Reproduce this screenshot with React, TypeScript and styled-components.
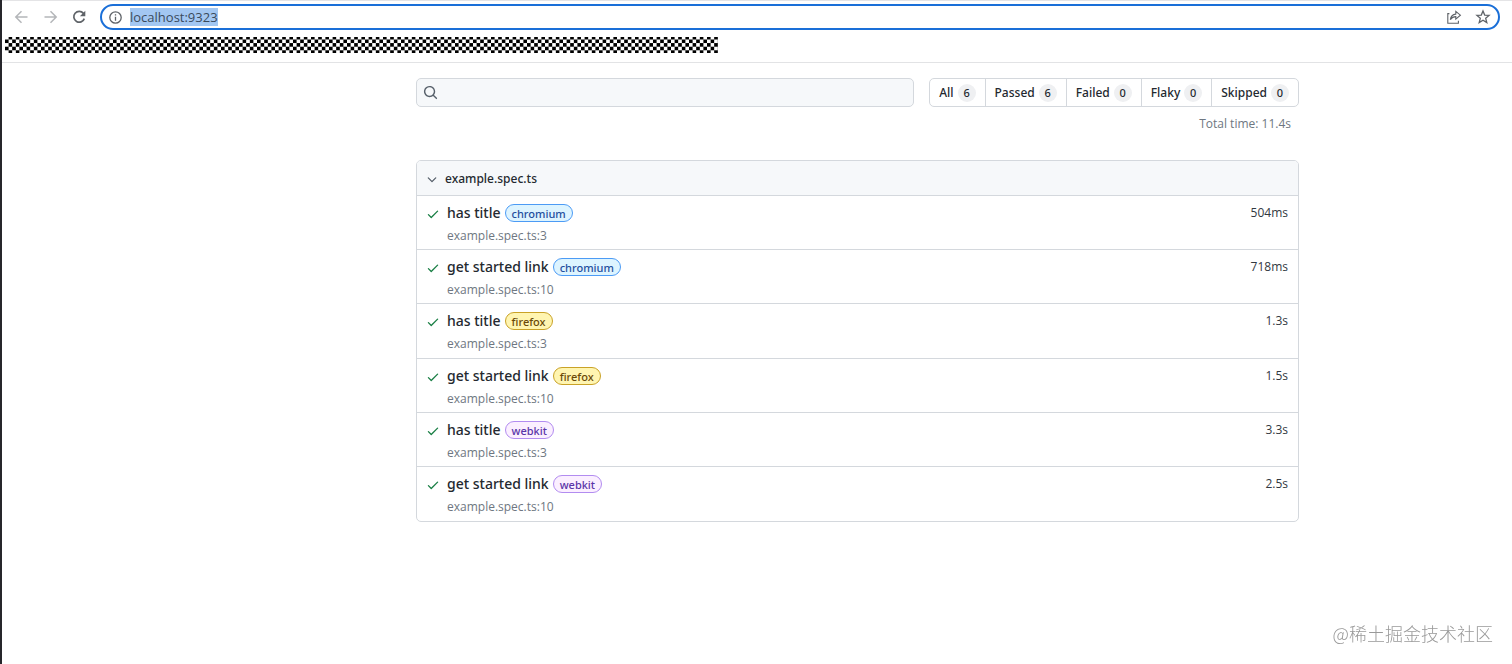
import React from "react";
import styled, { createGlobalStyle } from "styled-components";

const GlobalStyle = createGlobalStyle`
  *, *::before, *::after { box-sizing: border-box; }
  body {
    margin: 0;
    background: #fff;
    color: #24292f;
    font-family: "Open Sans", "Noto Sans", "Noto Sans CJK SC", sans-serif;
    font-size: 12px;
    line-height: 18px;
  }
  button, input { font: inherit; color: inherit; }
  h1, p { margin: 0; }
`;

const mediumFont = `"Noto Sans", "Open Sans", sans-serif`;

const Page = styled.div`
  min-height: 100vh;
  border-left: 2px solid #26262b;
`;

const BrowserBar = styled.header`
  border-top: 1px solid #e4e4e6;
  border-bottom: 1px solid #e2e3e5;
`;

const Toolbar = styled.div`
  display: flex;
  align-items: center;
  padding: 3px 12px 0 11px;
`;

const NavButton = styled.button`
  display: flex;
  align-items: center;
  justify-content: center;
  width: 16px;
  height: 16px;
  margin-right: 13px;
  padding: 0;
  border: 0;
  background: none;
  color: #5f6368;
  &:disabled { color: #b4b6b9; }
`;

const AddressBar = styled.label`
  flex: 1;
  display: flex;
  align-items: center;
  height: 26px;
  padding: 0 7px;
  border: 2px solid #1a6fd8;
  border-radius: 13px;
  background: #fff;
  color: #5f6368;
`;

const Address = styled.span`
  flex: 1;
  display: flex;
  margin-left: 8px;
`;

const AddressInput = styled.input`
  width: 88px;
  height: 18px;
  padding: 0;
  border: 0;
  outline: 0;
  background: #a3c7f2;
  color: #3a4a5c;
  font-size: 13px;
`;

const BarButton = styled(NavButton)`
  margin: 0 0 0 13px;
`;

const Bookmarks = styled.svg`
  display: block;
  margin: 7px 0 9px 3px;
`;

const Content = styled.main`
  display: grid;
  grid-template-columns: minmax(16px, 414fr) minmax(0, 883px) minmax(16px, 213fr);
`;

const Report = styled.div`
  grid-column: 2;
  padding: 15px 0 24px;
`;

const Controls = styled.div`
  display: flex;
  gap: 15px;
`;

const SearchBox = styled.label`
  flex: 1;
  display: flex;
  align-items: center;
  gap: 8px;
  height: 29px;
  padding: 0 6px;
  border: 1px solid #d4d8dd;
  border-radius: 5px;
  background: #f6f8fa;
  color: #57606a;
`;

const SearchInput = styled.input`
  flex: 1;
  min-width: 0;
  padding: 0;
  border: 0;
  outline: 0;
  background: none;
`;

const Filters = styled.nav`
  display: flex;
  border: 1px solid #d4d8dd;
  border-radius: 5px;
`;

const Filter = styled.a`
  display: flex;
  align-items: center;
  gap: 4px;
  padding: 0 9px;
  color: #24292f;
  font-family: ${mediumFont};
  font-weight: 500;
  text-decoration: none;
  & + & { border-left: 1px solid #d4d8dd; }
`;

const Counter = styled.span`
  min-width: 18px;
  border-radius: 9px;
  background: #eff0f2;
  font-size: 11px;
  text-align: center;
`;

const TotalTime = styled.p`
  margin: 8px 8px 27px 0;
  color: #6e7781;
  text-align: right;
`;

const SpecFile = styled.section`
  border: 1px solid #d4d8dd;
  border-radius: 5px;
  overflow: hidden;
`;

const SpecHeader = styled.button`
  display: flex;
  align-items: center;
  gap: 6px;
  width: 100%;
  height: 35px;
  padding: 2px 8px 0;
  border: 0;
  border-bottom: 1px solid #d4d8dd;
  background: #f6f8fa;
  font-family: ${mediumFont};
  font-weight: 500;
  text-align: left;
`;

const ChevronSlot = styled.span`
  display: flex;
  color: #57606a;
`;

const TestList = styled.div`
  display: grid;
  grid-auto-rows: 1fr;
  min-height: 325px;
`;

const TestRow = styled.article`
  display: flex;
  align-items: flex-start;
  padding: 7px 10px 0 9px;
  border-bottom: 1px solid #d4d8dd;
  &:last-child { border-bottom: 0; }
`;

const CheckSlot = styled.span`
  display: flex;
  margin: 4px 7px 0 0;
  color: #1a7f45;
`;

const TestInfo = styled.div`
  flex: 1;
`;

const TestTitle = styled.div`
  display: flex;
  align-items: center;
  gap: 4px;
  height: 20px;
  font-family: ${mediumFont};
  font-weight: 500;
`;

const TitleLink = styled.a`
  color: #24292f;
  font-size: 14px;
  text-decoration: none;
`;

type Browser = "chromium" | "firefox" | "webkit";

const palette: Record<Browser, [string, string, string]> = {
  chromium: ["#ddf4ff", "#4c9bf5", "#1f4f9e"],
  firefox: ["#fff5b1", "#c9a227", "#6b4a08"],
  webkit: ["#fbefff", "#b28cf0", "#5a35a8"],
};

const Label = styled.a<{ $browser: Browser }>`
  height: 18px;
  padding: 0 6px;
  border: 1px solid ${(p) => palette[p.$browser][1]};
  border-radius: 9px;
  background: ${(p) => palette[p.$browser][0]};
  color: ${(p) => palette[p.$browser][2]};
  font-size: 11px;
  line-height: 17px;
  text-decoration: none;
`;

const TestPath = styled.a`
  display: block;
  width: fit-content;
  margin-top: 4px;
  color: #6e7781;
  text-decoration: none;
`;

const Duration = styled.span`
  margin-top: 1px;
  color: #32383f;
`;

const Watermark = styled.div`
  position: fixed;
  right: 19px;
  bottom: 19px;
  color: #999;
  font-family: "Noto Sans CJK SC", sans-serif;
  font-size: 18px;
  font-weight: 300;
  line-height: 24px;
`;

const filters: [string, number][] = [
  ["All", 6],
  ["Passed", 6],
  ["Failed", 0],
  ["Flaky", 0],
  ["Skipped", 0],
];

const tests: { title: string; browser: Browser; path: string; time: string }[] = [
  { title: "has title", browser: "chromium", path: "example.spec.ts:3", time: "504ms" },
  { title: "get started link", browser: "chromium", path: "example.spec.ts:10", time: "718ms" },
  { title: "has title", browser: "firefox", path: "example.spec.ts:3", time: "1.3s" },
  { title: "get started link", browser: "firefox", path: "example.spec.ts:10", time: "1.5s" },
  { title: "has title", browser: "webkit", path: "example.spec.ts:3", time: "3.3s" },
  { title: "get started link", browser: "webkit", path: "example.spec.ts:10", time: "2.5s" },
];

const Stroke = ({ d, width = 1.5 }: { d: string; width?: number }) => (
  <svg width="16" height="16" viewBox="0 0 16 16" fill="none" stroke="currentColor" strokeWidth={width} aria-hidden="true">
    <path d={d} />
  </svg>
);

const Octicon = ({ d, size = 14 }: { d: string; size?: number }) => (
  <svg width={size} height={size} viewBox="0 0 16 16" fill="currentColor" aria-hidden="true">
    <path fillRule="evenodd" d={d} />
  </svg>
);

export default function App() {
  return (
    <Page>
      <GlobalStyle />
      <BrowserBar>
        <Toolbar>
          <NavButton aria-label="Back" disabled>
            <Stroke d="M14.5 8H3M8.5 2.3L2.8 8L8.5 13.7" />
          </NavButton>
          <NavButton aria-label="Forward" disabled>
            <Stroke d="M2.5 8h11.5M8.5 2.3L14.2 8L8.5 13.7" />
          </NavButton>
          <NavButton aria-label="Reload">
            <svg width="16" height="16" viewBox="0 0 16 16" fill="none" stroke="currentColor" strokeWidth="1.7" aria-hidden="true">
              <path d="M12.4 4.4A5.4 5.4 0 1 0 13.3 9.6" />
              <path d="M14.3 1.8V7.2H8.9z" fill="currentColor" stroke="none" />
            </svg>
          </NavButton>
          <AddressBar>
            <svg width="13" height="13" viewBox="0 0 13 13" fill="none" stroke="currentColor" strokeWidth="1.3" aria-hidden="true">
              <circle cx="6.5" cy="6.5" r="5.7" />
              <path d="M6.5 5.8V9.8M6.5 3.2V4.6" />
            </svg>
            <Address>
              <AddressInput aria-label="Address" defaultValue="localhost:9323" />
            </Address>
            <BarButton aria-label="Share">
              <Stroke width={1.1} d="M3.4 4.6H1.8V14.2H12.4V11.8M4.3 10.6C4.8 7.4 6.6 5.4 9.8 5.1V2.4L14.4 6.2L9.8 10.1V7.6C7.5 7.6 5.7 8.5 4.3 10.6Z" />
            </BarButton>
            <BarButton aria-label="Bookmark">
              <Stroke width={1.3} d="M8 2L9.7 6.1L14.1 6.4L10.7 9.3L11.8 13.6L8 11.3L4.2 13.6L5.3 9.3L1.9 6.4L6.3 6.1Z" />
            </BarButton>
          </AddressBar>
        </Toolbar>
        <Bookmarks width="713" height="16" aria-hidden="true">
          <defs>
            <pattern id="checks" y="-1.1" width="7.2" height="7.2" patternUnits="userSpaceOnUse">
              <path d="M3.6 0H7.2V3.6H3.6zM0 3.6H3.6V7.2H0z" fill="#000" />
            </pattern>
          </defs>
          <rect width="713" height="16" fill="url(#checks)" />
        </Bookmarks>
      </BrowserBar>

      <Content>
        <Report>
          <Controls>
            <SearchBox>
              <Octicon size={15} d="M11.5 7a4.499 4.499 0 1 1-8.998 0A4.499 4.499 0 0 1 11.5 7zm-.82 4.74a6 6 0 1 1 1.06-1.06l3.04 3.04a.75.75 0 1 1-1.06 1.06l-3.04-3.04z" />
              <SearchInput type="search" aria-label="Search tests" />
            </SearchBox>
            <Filters>
              {filters.map(([name, count]) => (
                <Filter key={name} href="#">
                  {name}
                  <Counter>{count}</Counter>
                </Filter>
              ))}
            </Filters>
          </Controls>
          <TotalTime>Total time: 11.4s</TotalTime>

          <SpecFile>
            <SpecHeader aria-expanded="true">
              <ChevronSlot>
                <Octicon d="M12.78 6.22a.75.75 0 0 1 0 1.06l-4.25 4.25a.75.75 0 0 1-1.06 0L3.22 7.28a.75.75 0 0 1 1.06-1.06L8 9.94l3.72-3.72a.75.75 0 0 1 1.06 0z" />
              </ChevronSlot>
              example.spec.ts
            </SpecHeader>
            <TestList>
              {tests.map((t) => (
                <TestRow key={t.title + t.browser}>
                  <CheckSlot>
                    <Octicon d="M13.78 4.22a.75.75 0 0 1 0 1.06l-7.25 7.25a.75.75 0 0 1-1.06 0L2.22 9.28a.75.75 0 0 1 1.06-1.06L6 10.94l6.72-6.72a.75.75 0 0 1 1.06 0z" />
                  </CheckSlot>
                  <TestInfo>
                    <TestTitle>
                      <TitleLink href="#">{t.title}</TitleLink>
                      <Label href="#" $browser={t.browser}>{t.browser}</Label>
                    </TestTitle>
                    <TestPath href="#">{t.path}</TestPath>
                  </TestInfo>
                  <Duration>{t.time}</Duration>
                </TestRow>
              ))}
            </TestList>
          </SpecFile>
        </Report>
      </Content>
      <Watermark>@稀土掘金技术社区</Watermark>
    </Page>
  );
}
